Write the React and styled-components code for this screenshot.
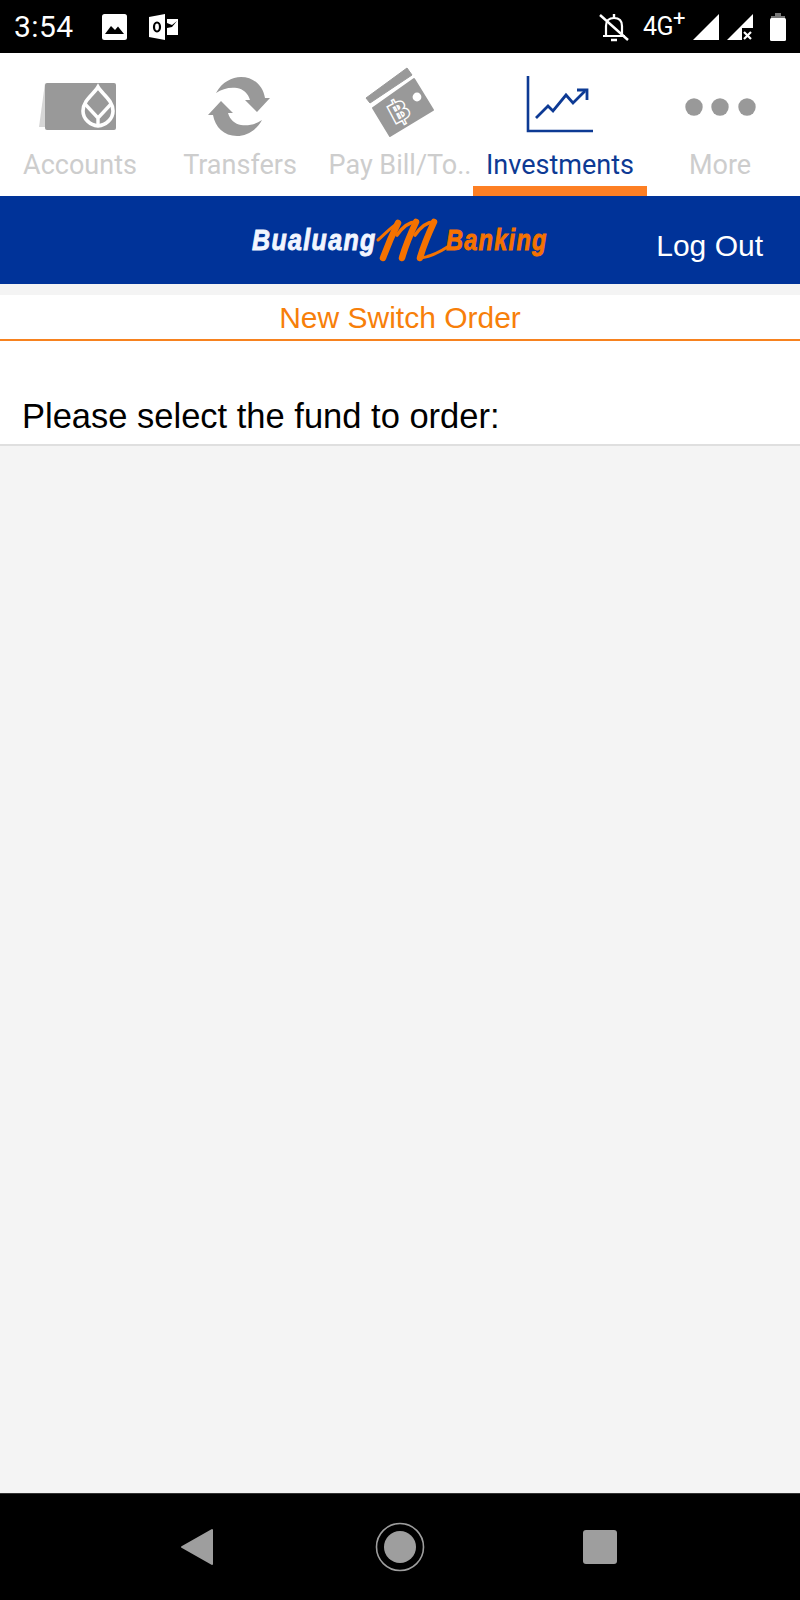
import React from 'react';
import styled, { createGlobalStyle } from 'styled-components';

const GlobalStyle = createGlobalStyle`
  html, body { margin: 0; padding: 0; background: #000; }
  * { box-sizing: border-box; }
`;

const Page = styled.div`
  display: flex;
  flex-direction: column;
  width: 800px;
  height: 1600px;
  overflow: hidden;
  background: #f4f4f4;
  font-family: "Liberation Sans", Arial, sans-serif;
`;

const StatusBar = styled.div`
  display: flex;
  align-items: center;
  justify-content: space-between;
  flex: 0 0 53px;
  padding: 0 14px;
  background: #000;
  color: #fff;
  font-family: Roboto, sans-serif;
`;

const StatusGroup = styled.div`
  display: flex;
  align-items: center;
`;

const StatusIcon = styled.svg`
  margin-right: ${p => p.$gap || 0}px;
`;

const Time = styled.span`
  width: 88px;
  font-size: 30px;
  letter-spacing: 0.4px;
`;

const Network = styled.span`
  width: 50px;
  font-size: 25px;
  line-height: 1;
  letter-spacing: -0.5px;

  sup {
    font-size: 22px;
    line-height: 0;
  }
`;

const Tabs = styled.nav`
  display: grid;
  grid-template-columns: repeat(5, 160px);
  flex: 0 0 143px;
  background: #fff;
`;

const Tab = styled.div`
  display: flex;
  flex-direction: column;
  align-items: center;
  padding-top: 13px;
  font-family: Roboto, sans-serif;
  font-size: 27px;
  color: ${p => (p.$active ? '#0d3a94' : '#cdcdcd')};
`;

const TabLabel = styled.span`
  margin-top: 10px;
  line-height: 30px;
  white-space: nowrap;
`;

const TabMark = styled.div`
  width: 174px;
  height: 10px;
  margin-top: auto;
  background: ${p => (p.$active ? '#fd7f24' : 'transparent')};
`;

const Header = styled.header`
  display: flex;
  align-items: center;
  justify-content: space-between;
  flex: 0 0 88px;
  padding: 0 37px 0 252px;
  background: #003399;
`;

const Logo = styled.div`
  display: flex;
  align-items: center;
`;

const LogoMark = styled.svg`
  margin-right: -4px;
  overflow: visible;
`;

const LogoWord = styled.span`
  display: inline-block;
  width: ${p => p.$width}px;
  font-size: 29px;
  font-weight: bold;
  font-style: italic;
  letter-spacing: 1.6px;
  white-space: nowrap;
  color: ${p => p.$color};
  transform: scaleX(${p => p.$scale});
  transform-origin: left center;
  -webkit-text-stroke: 0.9px ${p => p.$color};
`;

const LogOut = styled.span`
  margin-top: 12px;
  font-size: 30px;
  color: #fff;
`;

const Gap = styled.div`
  flex: 0 0 11px;
`;

const Title = styled.div`
  flex: 0 0 46px;
  padding-top: 2px;
  border-bottom: 2px solid #f7821f;
  background: #fff;
  font-size: 30px;
  line-height: 42px;
  text-align: center;
  color: #f77f0a;
`;

const Prompt = styled.div`
  display: flex;
  align-items: flex-end;
  flex: 0 0 105px;
  padding: 0 0 6px 22px;
  border-bottom: 2px solid #dfdfdf;
  background: #fff;
  font-size: 34.5px;
  line-height: 44px;
  color: #000;
`;

const Content = styled.main`
  flex: 1;
  background: #f4f4f4;
`;

const SystemNav = styled.div`
  display: grid;
  grid-template-columns: repeat(3, 200px);
  justify-content: center;
  align-items: center;
  flex: 0 0 107px;
  border-top: 1px solid #333;
  background: #000;
`;

const NavButton = styled.div`
  display: flex;
  justify-content: center;
  padding-right: ${p => p.$shift || 0}px;
`;

const TabIcon = ({ x, children }) => (
  <svg width="90" height="74" viewBox={`${x} 66 90 74`}>{children}</svg>
);

const turn = 'M216 93 C222 82 232 77 241 77 C254 77 263 86 265 98 L270 98 L257 112 L245 100 L250 100 C248 93 243 89 237 88 C229 87 222 89 216 93 Z';

const tabs = [
  {
    label: 'Accounts',
    x: 35,
    icon: (
      <>
        <path d="M45 83 L39 127 L46 127 Z" fill="#d6d6d6" />
        <rect x="45" y="83" width="71" height="47" rx="2" fill="#999" />
        <path
          d="M98 87 C94 94 83 100 83 111 C83 119 90 125 98 126 C106 125 113 119 113 111 C113 100 102 94 98 87 Z"
          fill="none" stroke="#fff" strokeWidth="3.6"
        />
        <path d="M85 104 L98 118 L111 104 M98 118 V126" fill="none" stroke="#fff" strokeWidth="3.4" />
      </>
    ),
  },
  {
    label: 'Transfers',
    x: 195,
    icon: (
      <>
        <path d={turn} fill="#999" />
        <path d={turn} fill="#999" transform="rotate(180 239 106.5)" />
      </>
    ),
  },
  {
    label: 'Pay Bill/To..',
    x: 355,
    icon: (
      <>
        <path d="M366 98 L407 68 L412 75 L370 103 Z" fill="#999" stroke="#999" strokeWidth="1" strokeLinejoin="round" />
        <path d="M373 108 L414 79 L433 110 L390 136 Z" fill="#999" strokeLinejoin="round" stroke="#999" strokeWidth="2" />
        <circle cx="417" cy="97" r="4.4" fill="#fff" />
        <text
          x="399" y="121" textAnchor="middle" fontSize="30" fontWeight="bold"
          fontFamily="DejaVu Sans" fill="#999" stroke="#fff" strokeWidth="1.3"
          transform="rotate(-28 399 111)"
        >฿</text>
      </>
    ),
  },
  {
    label: 'Investments',
    x: 515,
    active: true,
    icon: (
      <>
        <path d="M528 76 V131 H593" fill="none" stroke="#0d3a94" strokeWidth="2.6" />
        <path d="M536 118 L548 106 L553 111 L566 95 L573 103 L585 91" fill="none" stroke="#0d3a94" strokeWidth="2.8" />
        <path d="M577 90 H587 V100" fill="none" stroke="#0d3a94" strokeWidth="2.8" />
      </>
    ),
  },
  {
    label: 'More',
    x: 675,
    icon: (
      <>
        <circle cx="694" cy="107" r="8.7" fill="#999" />
        <circle cx="720" cy="107" r="8.7" fill="#999" />
        <circle cx="747" cy="107" r="8.7" fill="#999" />
      </>
    ),
  },
];

export default function App() {
  return (
    <Page>
      <GlobalStyle />
      <StatusBar>
        <StatusGroup>
          <Time>3:54</Time>
          <StatusIcon $gap={22} width="25" height="26" viewBox="0 0 25 26">
            <rect width="25" height="26" rx="2.5" fill="#fff" />
            <path d="M3 20 L9 12 L13 16 L16 12.5 L22 20 Z" fill="#000" />
          </StatusIcon>
          <StatusIcon width="29" height="26" viewBox="0 0 29 26">
            <path d="M0 3 L16 0 V26 L0 23 Z" fill="#fff" />
            <path d="M18 5 H29 V21 H18 V14 L23 13 L28 7 L23 11 L18 9 Z" fill="#fff" />
            <ellipse cx="8" cy="13" rx="3" ry="4.5" fill="none" stroke="#000" strokeWidth="2.2" />
          </StatusIcon>
        </StatusGroup>
        <StatusGroup>
          <StatusIcon $gap={14} width="30" height="30" viewBox="0 0 30 30">
            <path d="M7 24 V14 C7 9 10 6 15 6 C20 6 23 9 23 14 V24 M4 24 H26" fill="none" stroke="#fff" strokeWidth="2.2" />
            <path d="M15 2 V6 M12 28 H18" stroke="#fff" strokeWidth="2.4" />
            <path d="M1 3 L29 28" stroke="#fff" strokeWidth="2.4" />
          </StatusIcon>
          <Network>4G<sup>+</sup></Network>
          <StatusIcon $gap={8} width="26" height="26" viewBox="0 0 26 26">
            <path d="M0 26 L26 0 V26 Z" fill="#fff" />
          </StatusIcon>
          <StatusIcon $gap={17} width="26" height="26" viewBox="0 0 26 26">
            <path d="M0 26 L26 0 V14 H15 V26 Z" fill="#fff" />
            <path d="M17 18 L24 25 M24 18 L17 25" stroke="#fff" strokeWidth="2.2" />
          </StatusIcon>
          <StatusIcon width="16" height="28" viewBox="0 0 16 28">
            <path d="M5 0 H11 V3 H5 Z" fill="#777" />
            <path d="M1 3 H15 V6 H1 Z" fill="#777" />
            <rect y="5" width="16" height="23" rx="1.5" fill="#fff" />
          </StatusIcon>
        </StatusGroup>
      </StatusBar>

      <Tabs>
        {tabs.map(t => (
          <Tab key={t.label} $active={t.active}>
            <TabIcon x={t.x}>{t.icon}</TabIcon>
            <TabLabel>{t.label}</TabLabel>
            <TabMark $active={t.active} />
          </Tab>
        ))}
      </Tabs>

      <Header>
        <Logo>
          <LogoWord $width={124} $scale={0.86} $color="#f2f5ff">Bualuang</LogoWord>
          <LogoMark width="74" height="46" viewBox="376 216 74 46">
            <g fill="none" stroke="#f57200" strokeLinecap="round" strokeLinejoin="round">
              <path d="M378 239 C385 233 391 226 398 222" strokeWidth="3" />
              <path d="M398 222 C392 234 387 246 383 257" strokeWidth="6.5" />
              <path d="M397 234 C402 227 409 221 416 221" strokeWidth="3.6" />
              <path d="M416 221 C410 234 405 246 402 257" strokeWidth="6.5" />
              <path d="M415 234 C420 227 427 221 434 221" strokeWidth="3.6" />
              <path d="M434 221 C428 234 423 246 420 257" strokeWidth="6.5" />
              <path d="M420 257 C430 256 440 251 449 245" strokeWidth="3" />
            </g>
          </LogoMark>
          <LogoWord $width={100} $scale={0.81} $color="#f57200">Banking</LogoWord>
        </Logo>
        <LogOut>Log Out</LogOut>
      </Header>

      <Gap />
      <Title>New Switch Order</Title>
      <Prompt>Please select the fund to order:</Prompt>
      <Content />

      <SystemNav>
        <NavButton $shift={6}>
          <svg width="34" height="38" viewBox="0 0 34 38">
            <path d="M2 19 L32 2 V36 Z" fill="#9e9e9e" stroke="#9e9e9e" strokeWidth="2" strokeLinejoin="round" />
          </svg>
        </NavButton>
        <NavButton>
          <svg width="50" height="50" viewBox="0 0 50 50">
            <circle cx="25" cy="25" r="23.5" fill="none" stroke="#9e9e9e" strokeWidth="1.6" />
            <circle cx="25" cy="25" r="16" fill="#9e9e9e" />
          </svg>
        </NavButton>
        <NavButton>
          <svg width="34" height="34" viewBox="0 0 34 34">
            <rect width="34" height="34" rx="3" fill="#9e9e9e" />
          </svg>
        </NavButton>
      </SystemNav>
    </Page>
  );
}
